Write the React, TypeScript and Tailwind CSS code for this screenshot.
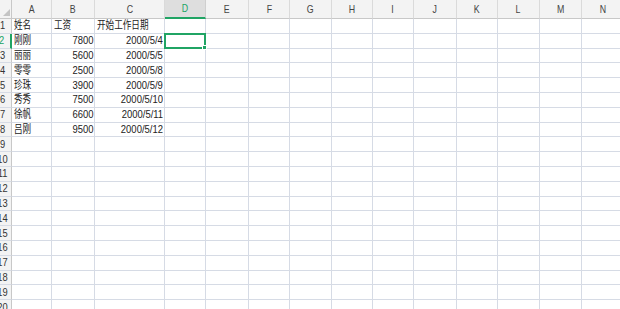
import React from 'react';

const cols = [
  { l: 'A', w: 'w-[40px]' },
  { l: 'B', w: 'w-[43px]' },
  { l: 'C', w: 'w-[70px]' },
  { l: 'D', w: 'w-[41px]' },
  { l: 'E', w: 'w-[43px]' },
  { l: 'F', w: 'w-[41px]' },
  { l: 'G', w: 'w-[42px]' },
  { l: 'H', w: 'w-[41px]' },
  { l: 'I', w: 'w-[41px]' },
  { l: 'J', w: 'w-[43px]' },
  { l: 'K', w: 'w-[41px]' },
  { l: 'L', w: 'w-[42px]' },
  { l: 'M', w: 'w-[42px]' },
  { l: 'N', w: 'w-[42px]' },
];

const data: string[][] = [
  ['姓名', '工资', '开始工作日期'],
  ['刚刚', '7800', '2000/5/4'],
  ['丽丽', '5600', '2000/5/5'],
  ['零零', '2500', '2000/5/8'],
  ['珍珠', '3900', '2000/5/9'],
  ['秀秀', '7500', '2000/5/10'],
  ['徐帆', '6600', '2000/5/11'],
  ['吕刚', '9500', '2000/5/12'],
];

const font = { fontFamily: '"Liberation Sans", "Noto Sans CJK SC", sans-serif' };

// squeezed text, the shot is narrower than the real sheet
const Txt = ({ children, right }: { children: React.ReactNode; right?: boolean }) => (
  <span className={`inline-block whitespace-nowrap text-[11px] leading-none ${right ? 'origin-right scale-x-[0.86]' : 'origin-left scale-x-[0.78]'}`}>
    {children}
  </span>
);

export default function App() {
  const rows = Array.from({ length: 20 }, (_, i) => i + 1);

  return (
    <div className="w-[620px] h-[309px] overflow-hidden bg-white text-[#222]" style={font}>
      {/* column headers */}
      <div className="flex h-[19px]">
        <div className="relative w-[12px] shrink-0 bg-[#f3f3f3] border-r border-b border-[#c8c8c8]">
          <div className="absolute right-[1px] bottom-[2px] w-0 h-0 border-l-[7px] border-l-transparent border-b-[7px] border-b-[#c4c4c4]" />
        </div>
        {cols.map((c) => (
          <div
            key={c.l}
            className={`${c.w} shrink-0 flex items-center justify-center border-r ${
              c.l === 'D'
                ? 'bg-[#dedede] border-r-[#cfcfcf] border-b-2 border-b-[#20a464] text-[#20a464]'
                : 'bg-[#f3f3f3] border-r-[#dadada] border-b border-b-[#c8c8c8] text-[#444]'
            }`}
          >
            <span className="inline-block text-[11px] leading-none scale-x-[0.8]">{c.l}</span>
          </div>
        ))}
      </div>

      {rows.map((r) => {
        const d = data[r - 1];
        return (
          <div key={r} className="flex h-[14.8px]">
            <div
              className={`w-[12px] shrink-0 flex justify-end items-center overflow-hidden bg-[#f3f3f3] border-b border-[#d6dbe5] border-r ${
                r === 2 ? 'border-r-2 border-r-[#20a464] text-[#20a464]' : 'border-r-[#c8c8c8] text-[#333]'
              }`}
            >
              <span className="w-[17px] shrink-0 text-center text-[11px] leading-none scale-x-[0.85]">{r}</span>
            </div>
            {cols.map((c, ci) => {
              const left = ci === 0 || r === 1;
              return (
                <div
                  key={c.l}
                  className={`${c.w} shrink-0 relative flex items-center border-r border-b border-[#d6dbe5] ${
                    left ? 'justify-start pl-[2px]' : 'justify-end pr-[1px]'
                  }`}
                >
                  {d && ci < 3 && <Txt right={!left}>{d[ci]}</Txt>}
                  {r === 2 && c.l === 'D' && (
                    <div className="absolute -left-[1px] -top-[1px] w-[42px] h-[16px] border-2 border-[#20a464] z-10">
                      <div className="absolute -right-[2px] -bottom-[2px] w-[3px] h-[3px] bg-[#20a464] outline outline-1 outline-white" />
                    </div>
                  )}
                </div>
              );
            })}
          </div>
        );
      })}
    </div>
  );
}
